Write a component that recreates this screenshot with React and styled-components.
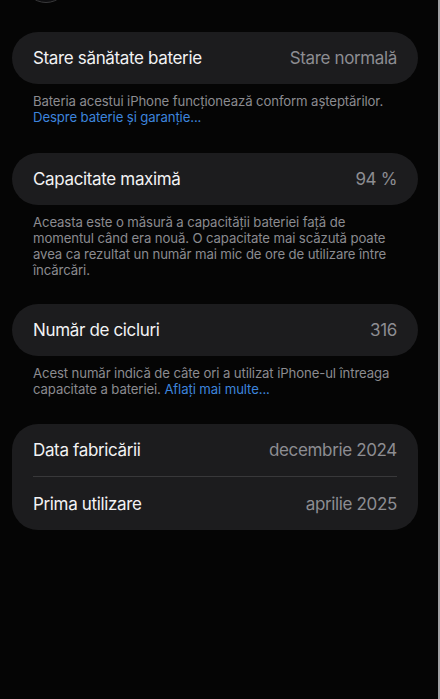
import React from 'react';
import styled, { createGlobalStyle } from 'styled-components';

const GlobalStyle = createGlobalStyle`
  html, body {
    margin: 0;
    padding: 0;
    background: #050505;
  }
  body {
    font-family: Inter, "Noto Sans", "Liberation Sans", sans-serif;
    -webkit-font-smoothing: antialiased;
  }
`;

const Screen = styled.div`
  box-sizing: border-box;
  width: 440px;
  height: 699px;
  overflow: hidden;
  background: #050505;
  border-right: 2px solid #a3a3a6;
  padding: 0 20px 0 12px;
`;

const TopBar = styled.div`
  height: 32px;
  display: flex;
  align-items: flex-end;
  padding-left: 11px;
`;

const BackCircle = styled.div`
  width: 44px;
  height: 44px;
  flex: none;
  margin-bottom: 29px;
  border-radius: 50%;
  border: 1px solid #3a3a3c;
  background: #0e0e10;
`;

const Section = styled.section`
  margin-bottom: ${(p) => p.gap}px;
`;

const Card = styled.div`
  background: #1c1c1e;
  border-radius: 26px;
  padding: 0 21px;
`;

const Row = styled.div`
  height: ${(p) => (p.tall ? 53 : 52)}px;
  display: flex;
  align-items: center;
  justify-content: space-between;
  font-size: 17px;
  letter-spacing: -0.35px;
  border-bottom: ${(p) => (p.divider ? '1px solid #38383a' : 'none')};
  box-sizing: border-box;
`;

const Label = styled.span`
  color: #f2f2f4;
`;

const Value = styled.span`
  color: #8d8d92;
`;

const Footer = styled.p`
  margin: 9px 0 0;
  padding: 0 21px;
  font-size: 13.2px;
  line-height: 16px;
  letter-spacing: -0.12px;
  color: #8b8b90;
`;

const Link = styled.span`
  color: #3d84dc;
`;

export default function App() {
  return (
    <>
      <GlobalStyle />
      <Screen>
        <TopBar>
          <BackCircle />
        </TopBar>

        <Section gap={28}>
          <Card>
            <Row>
              <Label>Stare sănătate baterie</Label>
              <Value>Stare normală</Value>
            </Row>
          </Card>
          <Footer>
            Bateria acestui iPhone funcționează conform așteptărilor.
            <br />
            <Link>Despre baterie și garanție...</Link>
          </Footer>
        </Section>

        <Section gap={26}>
          <Card>
            <Row>
              <Label>Capacitate maximă</Label>
              <Value>94 %</Value>
            </Row>
          </Card>
          <Footer>
            Aceasta este o măsură a capacității bateriei față de momentul când era nouă. O capacitate mai scăzută poate avea ca rezultat un număr mai mic de ore de utilizare între încărcări.
          </Footer>
        </Section>

        <Section gap={27}>
          <Card>
            <Row>
              <Label>Număr de cicluri</Label>
              <Value>316</Value>
            </Row>
          </Card>
          <Footer>
            Acest număr indică de câte ori a utilizat iPhone-ul întreaga capacitate a bateriei. <Link>Aflați mai multe...</Link>
          </Footer>
        </Section>

        <Section gap={0}>
          <Card>
            <Row tall divider>
              <Label>Data fabricării</Label>
              <Value>decembrie 2024</Value>
            </Row>
            <Row tall>
              <Label>Prima utilizare</Label>
              <Value>aprilie 2025</Value>
            </Row>
          </Card>
        </Section>
      </Screen>
    </>
  );
}
